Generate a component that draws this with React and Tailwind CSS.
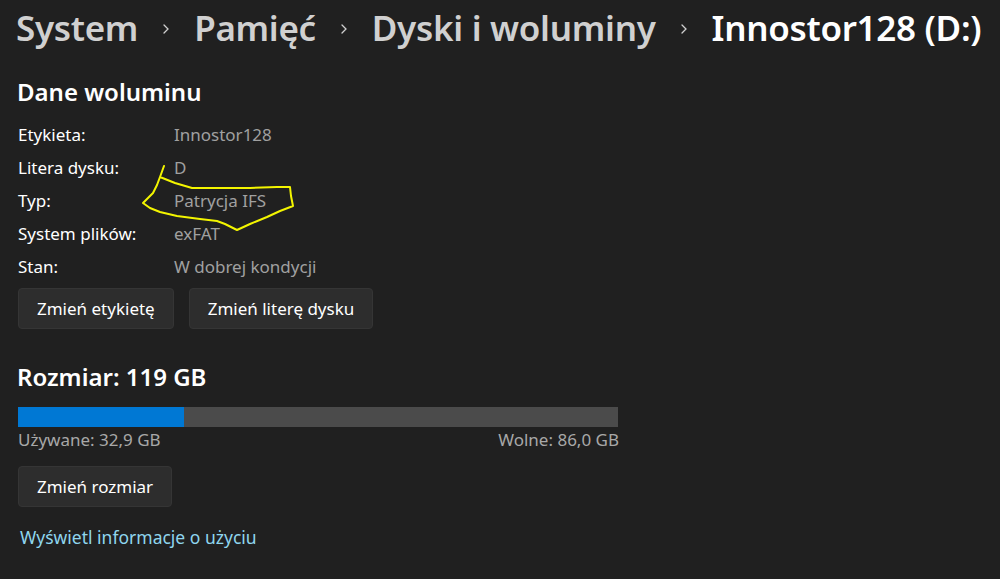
import React from "react";

const rows = [
  ["Etykieta:", "Innostor128"],
  ["Litera dysku:", "D"],
  ["Typ:", "Patrycja IFS"],
  ["System plików:", "exFAT"],
  ["Stan:", "W dobrej kondycji"],
];

function Chevron() {
  return (
    <svg width="12" height="14" viewBox="0 0 12 14" className="mx-[22px] mt-[2px]">
      <path d="M4 3 L8 7 L4 11" fill="none" stroke="#cfcfcf" strokeWidth="1.3" strokeLinecap="round" />
    </svg>
  );
}

function Btn({ children }) {
  return (
    <button className="h-[41px] px-[18px] rounded-[4px] bg-[#2d2d2d] border border-[#353535] text-[17px] text-white">
      {children}
    </button>
  );
}

export default function App() {
  const used = 32.9;
  const total = 118.9;
  return (
    <div
      className="relative w-[1000px] h-[579px] bg-[#202020] text-white overflow-hidden"
      style={{ fontFamily: '"Segoe UI", "Noto Sans", sans-serif' }}
    >
      {/* okruszki */}
      <div className="flex items-center h-[56px] pl-[16px] text-[35px] font-semibold tracking-[-0.3px]">
        <span className="text-[#d0d0d0]">System</span>
        <Chevron />
        <span className="text-[#d0d0d0]">Pamięć</span>
        <Chevron />
        <span className="text-[#d0d0d0]">Dyski i woluminy</span>
        <Chevron />
        <span>Innostor128 (D:)</span>
      </div>

      <div className="pl-[17px] pt-[19px]">
        <h2 className="text-[24px] font-semibold leading-[34px]">Dane woluminu</h2>

        <div className="mt-[9px] flex flex-col text-[17px]">
          {rows.map(([k, v]) => (
            <div key={k} className="flex h-[33px] items-center">
              <span className="w-[157px] pl-[1px]">{k}</span>
              <span className="text-[#a0a0a0]">{v}</span>
            </div>
          ))}
        </div>

        <div className="mt-[5px] flex gap-[15px] pl-[1px]">
          <Btn>Zmień etykietę</Btn>
          <Btn>Zmień literę dysku</Btn>
        </div>

        <h2 className="mt-[31px] text-[24px] font-semibold leading-[34px]">Rozmiar: 119 GB</h2>

        <div className="mt-[13px] ml-[1px] w-[600px] h-[20px] bg-[#4b4b4b] flex">
          <div className="h-full bg-[#0078d4]" style={{ width: `${(used / total) * 100}%` }} />
        </div>
        <div className="w-[601px] ml-[1px] flex justify-between text-[17px] text-[#a8a8a8] leading-[26px]">
          <span>Używane: 32,9 GB</span>
          <span>Wolne: 86,0 GB</span>
        </div>

        <div className="mt-[13px] pl-[1px]">
          <Btn>Zmień rozmiar</Btn>
        </div>

        <div className="mt-[17px] pl-[3px] text-[17.5px] text-[#8fd6ee]">Wyświetl informacje o użyciu</div>
      </div>

      {/* odręczne zaznaczenie */}
      <svg className="absolute left-0 top-0 pointer-events-none" width="1000" height="579">
        <path
          d="M164 166 L160 177 L175 183 L192 188 L250 188 L277 187 L290 187 L291 196 L293 206 L280 211 L267 217 L250 224 L237 230 L225 224 L217 221 L200 219 L177 216 L160 212 L150 208 L143 203 L148 198 L153 193 L157 185 L160 177"
          fill="none"
          stroke="#f3f500"
          strokeWidth="2"
          strokeLinejoin="round"
          strokeLinecap="round"
        />
      </svg>
    </div>
  );
}
